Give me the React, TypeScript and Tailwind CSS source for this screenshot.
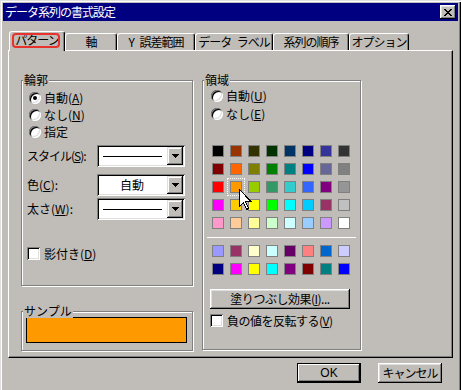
import type { ReactNode } from 'react';

const row1 = ['#000000', '#993300', '#333300', '#003300', '#003366', '#000080', '#333399', '#333333'];
const row2 = ['#800000', '#ff6600', '#808000', '#008000', '#008080', '#0000ff', '#666699', '#808080'];
const row3 = ['#ff0000', '#ff9900', '#99cc00', '#339966', '#33cccc', '#3366ff', '#800080', '#969696'];
const row4 = ['#ff00ff', '#ffcc00', '#ffff00', '#00ff00', '#00ffff', '#00ccff', '#993366', '#c0c0c0'];
const row5 = ['#ff99cc', '#ffcc99', '#ffff99', '#ccffcc', '#ccffff', '#99ccff', '#cc99ff', '#ffffff'];
const row6 = ['#9999ff', '#993366', '#ffffcc', '#ccffff', '#660066', '#ff8080', '#0066cc', '#ccccff'];
const row7 = ['#000080', '#ff00ff', '#ffff00', '#00ffff', '#800080', '#800000', '#008080', '#0000ff'];

const tabs = [
  { label: 'パターン', w: 'w-[56px]' },
  { label: '軸', w: 'w-[52px]' },
  { label: 'Y 誤差範囲', w: 'w-[78px]' },
  { label: 'データ ラベル', w: 'w-[78px]' },
  { label: '系列の順序', w: 'w-[76px]' },
  { label: 'オプション', w: 'w-[60px]' },
];

// pixel X for the title bar close box
const xPixels = [
  [0, 1, 6, 7],
  [1, 2, 5, 6],
  [2, 3, 4, 5],
  [3, 4],
  [2, 3, 4, 5],
  [1, 2, 5, 6],
  [0, 1, 6, 7],
];

function Mn({ children }: { children: ReactNode }) {
  return <span className="underline underline-offset-[1px]">{children}</span>;
}

function Radio({ checked }: { checked?: boolean }) {
  return (
    <span className="w-[12px] h-[12px] shrink-0 rounded-full bg-white flex items-center justify-center shadow-[inset_1px_1px_0_#808080,inset_-1px_-1px_0_#fff,inset_2px_2px_0_#000,inset_-2px_-2px_0_#dfdfdf]">
      {checked && <span className="w-[4px] h-[4px] rounded-full bg-black" />}
    </span>
  );
}

function Check() {
  return (
    <span className="w-[13px] h-[13px] shrink-0 bg-white shadow-[inset_1px_1px_0_#808080,inset_-1px_-1px_0_#fff,inset_2px_2px_0_#000,inset_-2px_-2px_0_#dfdfdf]" />
  );
}

function Arrow() {
  return (
    <svg width="7" height="4" viewBox="0 0 7 4" shapeRendering="crispEdges">
      <path d="M0 0h7v1H0zM1 1h5v1H1zM2 2h3v1H2zM3 3h1v1H3z" fill="#000" />
    </svg>
  );
}

function Combo({ children }: { children: ReactNode }) {
  return (
    <div className="w-[88px] h-[22px] bg-white p-[2px] flex shadow-[inset_1px_1px_0_#808080,inset_-1px_-1px_0_#fff,inset_2px_2px_0_#000,inset_-2px_-2px_0_#dfdfdf]">
      <div className="flex-1 flex items-center justify-center">{children}</div>
      <div className="w-[16px] h-[18px] bg-[#c0bcb8] flex items-center justify-center shadow-[inset_-1px_-1px_0_#000,inset_1px_1px_0_#dfdfdf,inset_-2px_-2px_0_#808080,inset_2px_2px_0_#fff]">
        <Arrow />
      </div>
    </div>
  );
}

function Group({ label, className, children }: { label: string; className: string; children?: ReactNode }) {
  return (
    <div className={`relative border border-[#808080] shadow-[1px_1px_0_#fff,inset_1px_1px_0_#fff] ${className}`}>
      <span className="absolute top-[-8px] left-[1px] bg-[#c0bcb8] px-[1px] leading-[14px]">{label}</span>
      {children}
    </div>
  );
}

function Swatch({ color }: { color: string }) {
  return <div className="w-[12px] h-[12px] border border-[#808080]" style={{ background: color }} />;
}

export default function App() {
  return (
    <div className="w-[461px] h-[390px] overflow-hidden bg-[#c0bcb8] pt-[3px] px-[3px] text-[12px] leading-[14px] text-black font-['Noto_Sans_CJK_JP','Liberation_Sans',sans-serif] shadow-[inset_1px_1px_0_#dfdfdf,inset_2px_2px_0_#fff,inset_-1px_0_0_#000,inset_-2px_0_0_#808080]">
      {/* title bar */}
      <div className="h-[18px] bg-[#000080] flex items-center justify-between pl-[2px] pr-[2px]">
        <span className="text-white tracking-[-1px]">データ系列の書式設定</span>
        <div className="w-[16px] h-[14px] bg-[#c0bcb8] flex items-center justify-center shadow-[inset_-1px_-1px_0_#000,inset_1px_1px_0_#fff,inset_-2px_-2px_0_#808080,inset_2px_2px_0_#dfdfdf]">
          <svg width="8" height="7" viewBox="0 0 8 7" shapeRendering="crispEdges">
            {xPixels.map((xs, y) => xs.map((x) => <rect key={`${x}-${y}`} x={x} y={y} width="1" height="1" fill="#000" />))}
          </svg>
        </div>
      </div>

      {/* tabs */}
      <div className="flex items-end h-[19px] mt-[10px] ml-[6px]">
        {tabs.map((t, i) =>
          i === 0 ? (
            <div
              key={t.label}
              className={`relative z-10 ${t.w} h-[20px] -mb-[1px] bg-[#c0bcb8] border-t border-l border-white border-r border-r-black rounded-t-[3px] shadow-[inset_-1px_0_0_#808080] flex items-center justify-center`}
            >
              <span className="absolute left-[2px] right-[4px] top-[1px] h-[15px] border-2 border-[#e8322e] rounded-[4px]" />
              <span className="tracking-[-1px] -mt-[3px]">{t.label}</span>
            </div>
          ) : (
            <div
              key={t.label}
              className={`${t.w} h-[17px] border-t border-l border-white border-r border-r-black rounded-t-[3px] shadow-[inset_-1px_0_0_#808080] flex items-center justify-center`}
            >
              <span className="tracking-[-1px] whitespace-pre [word-spacing:4px]">{t.label}</span>
            </div>
          ),
        )}
      </div>

      {/* tab panel */}
      <div className="ml-[5px] w-[445px] h-[308px] border-t border-l border-white border-r border-b border-r-black border-b-black shadow-[inset_-1px_-1px_0_#808080] flex pt-[29px] pl-[12px] gap-[9px]">
        <div className="flex flex-col w-[172px]">
          <Group label="輪郭" className="h-[206px] pt-[8px]">
            <div className="flex items-center h-[17px] pl-[7px] gap-[3px]">
              <Radio checked />
              <span>自動(<Mn>A</Mn>)</span>
            </div>
            <div className="flex items-center h-[17px] pl-[7px] gap-[3px]">
              <Radio />
              <span>なし(<Mn>N</Mn>)</span>
            </div>
            <div className="flex items-center h-[17px] pl-[7px] gap-[3px]">
              <Radio />
              <span>指定</span>
            </div>
            <div className="flex items-center justify-between mt-[5px] pl-[5px] pr-[7px]">
              <span className="tracking-[-1px]">スタイル(<Mn>S</Mn>):</span>
              <Combo>
                <div className="w-[59px] h-px bg-black -ml-[2px]" />
              </Combo>
            </div>
            <div className="flex items-center justify-between mt-[7px] pl-[5px] pr-[7px]">
              <span>色(<Mn>C</Mn>):</span>
              <Combo>
                <span className="-ml-[2px]">自動</span>
              </Combo>
            </div>
            <div className="flex items-center justify-between mt-[2px] pl-[5px] pr-[7px]">
              <span>太さ(<Mn>W</Mn>):</span>
              <Combo>
                <div className="w-[59px] h-px bg-black -ml-[2px]" />
              </Combo>
            </div>
            <div className="flex items-center mt-[27px] pl-[5px] gap-[4px] h-[13px]">
              <Check />
              <span>影付き(<Mn>D</Mn>)</span>
            </div>
          </Group>

          <Group label="サンプル" className="h-[40px] mt-[25px] pt-[5px]">
            <div className="ml-[4px] w-[161px] h-[26px] border border-black bg-[#ff9900]" />
          </Group>
        </div>

        <Group label="領域" className="w-[159px] h-[270px] pt-[6px]">
          <div className="flex items-center h-[18px] pl-[8px] gap-[3px]">
            <Radio />
            <span>自動(<Mn>U</Mn>)</span>
          </div>
          <div className="flex items-center h-[18px] pl-[8px] gap-[3px]">
            <Radio />
            <span>なし(<Mn>E</Mn>)</span>
          </div>

          <div className="grid grid-cols-[repeat(8,12px)] gap-[6px] pl-[9px] mt-[22px]">
            {[row1, row2, row3, row4, row5].flatMap((r, ri) =>
              r.map((c, ci) =>
                ri === 2 && ci === 1 ? (
                  <div key={`a${ri}-${ci}`} className="relative">
                    <div className="w-[12px] h-[12px] border border-[#808080] outline outline-1 outline-dotted outline-[#fff] outline-offset-[2px]" style={{ background: c }} />
                    <svg className="absolute left-[9px] top-[8px] z-10" width="13" height="21" viewBox="0 0 13 21" shapeRendering="crispEdges">
                      <path d="M0.5 0.5V17.5L4.5 13.5L7.5 20.5L9.5 19.5L6.5 12.5H12L0.5 0.5Z" fill="#fff" stroke="#000" strokeWidth="1" />
                    </svg>
                  </div>
                ) : (
                  <Swatch key={`a${ri}-${ci}`} color={c} />
                ),
              ),
            )}
          </div>

          <div className="ml-[4px] mt-[8px] w-[149px] h-px bg-white" />

          <div className="grid grid-cols-[repeat(8,12px)] gap-[6px] pl-[9px] mt-[7px]">
            {[row6, row7].flatMap((r, ri) => r.map((c, ci) => <Swatch key={`b${ri}-${ci}`} color={c} />))}
          </div>

          <div className="ml-[7px] mt-[14px] w-[140px] h-[20px] flex items-center justify-center shadow-[inset_-1px_-1px_0_#000,inset_1px_1px_0_#fff,inset_-2px_-2px_0_#808080,inset_2px_2px_0_#dfdfdf]">
            <span className="tracking-[-0.5px]">塗りつぶし効果(<Mn>I</Mn>)...</span>
          </div>

          <div className="flex items-center mt-[5px] pl-[7px] gap-[4px] h-[13px]">
            <Check />
            <span className="tracking-[-0.5px]">負の値を反転する(<Mn>V</Mn>)</span>
          </div>
        </Group>
      </div>

      {/* dialog buttons */}
      <div className="flex gap-[17px] mt-[5px] pl-[294px]">
        <div className="w-[64px] h-[20px] border border-black flex items-center justify-center shadow-[inset_-1px_-1px_0_#000,inset_1px_1px_0_#fff,inset_-2px_-2px_0_#808080]">
          <span className="font-['Liberation_Sans',sans-serif]">OK</span>
        </div>
        <div className="w-[64px] h-[20px] flex items-center justify-center shadow-[inset_-1px_-1px_0_#000,inset_1px_1px_0_#fff,inset_-2px_-2px_0_#808080,inset_2px_2px_0_#dfdfdf]">
          <span className="tracking-[-1px]">キャンセル</span>
        </div>
      </div>
    </div>
  );
}
